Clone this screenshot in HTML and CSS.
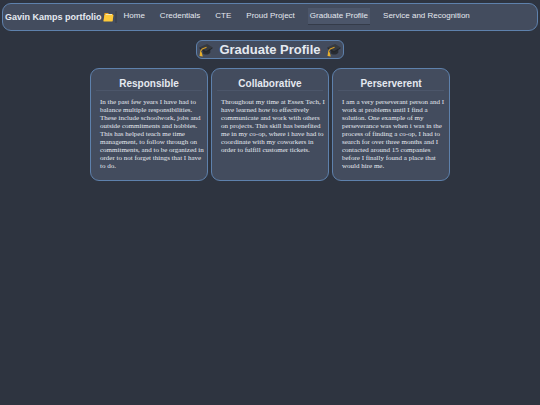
FILE: index.html
```
<!DOCTYPE html>
<html lang="en">
<head>
  <meta charset="UTF-8">
  <meta name="viewport" content="width=device-width, initial-scale=1">
  <title>Graduate Profile</title>
  <link rel="stylesheet" href="styles.css">
</head>
<body>
  <!-- Shared icon -->
  <svg class="defs" aria-hidden="true">
    <symbol id="cap" viewBox="0 0 26 26">
      <path d="M7 12v7c3 4 11 3 14-1v-7z" fill="#292d33"/>
      <path d="M1 8l14-6 10 6-12 8z" fill="#363a40"/>
      <path d="M1 8l12 8 12-8v2l-12 8-12-8z" fill="#24272c"/>
      <path d="M14 8L6 11l-3 4v4" fill="none" stroke="#d99f26" stroke-width="2"/>
      <path d="M2 17h3l2 8-6-1z" fill="#e8b02e"/>
    </symbol>
  </svg>

  <header class="navbar">
    <div class="brand">
      Gavin Kamps portfolio
      <svg class="folder" viewBox="0 0 22 20" aria-hidden="true">
        <path d="M3 2h7l2 2h8l-1 14H1z" fill="#e59a1c"/>
        <path d="M5 4h13v3H5z" fill="#f7e9b0"/>
        <path d="M3 6h18l-2 13H1z" fill="#fdc93a"/>
      </svg>
    </div>
    <nav>
      <a href="#">Home</a>
      <a href="#">Credentials</a>
      <a href="#">CTE</a>
      <a href="#">Proud Project</a>
      <a href="#" class="active">Graduate Profile</a>
      <a href="#">Service and Recognition</a>
    </nav>
  </header>

  <main>
    <h1>
      <svg class="cap" aria-hidden="true"><use href="#cap"/></svg>
      Graduate Profile
      <svg class="cap" aria-hidden="true"><use href="#cap"/></svg>
    </h1>

    <section class="cards">
      <article class="card">
        <h2>Responsible</h2>
        <p>In the past few years I have had to balance multiple responsibilities. These include schoolwork, jobs and outside commitments and hobbies. This has helped teach me time management, to follow through on commitments, and to be organized in order to not forget things that I have to do.</p>
      </article>
      <article class="card">
        <h2>Collaborative</h2>
        <p>Throughout my time at Essex Tech, I have learned how to effectively communicate and work with others on projects. This skill has benefited me in my co-op, where i have had to coordinate with my coworkers in order to fulfill customer tickets.</p>
      </article>
      <article class="card">
        <h2>Perserverent</h2>
        <p>I am a very perseverant person and I work at problems until I find a solution. One example of my perseverance was when i was in the process of finding a co-op, I had to search for over three months and I contacted around 15 companies before I finally found a place that would hire me.</p>
      </article>
    </section>
  </main>
</body>
</html>
```

FILE: styles.css
```
* {
  box-sizing: border-box;
}
body {
  margin: 3px 2px;
  background: #2e3440;
  color: #e5e9f0;
  font-family: "Liberation Sans", Arial, sans-serif;
}
.defs {
  display: none;
}
/* Navigation */
.navbar {
  display: flex;
  align-items: center;
  height: 28px;
  padding: 0 2px;
  background: #434c5e;
  border: 1px solid #5e81ac;
  border-radius: 9px;
}
.brand {
  display: flex;
  align-items: center;
  gap: 1px;
  padding-right: 1px;
  border-right: 2px solid #3b4252;
  font-size: 9px;
  line-height: 12px;
  font-weight: bold;
  white-space: nowrap;
}
.folder {
  width: 11px;
  height: 10px;
}
nav {
  display: flex;
  align-self: flex-start;
  gap: 11px;
  margin: 4px 0 0 5px;
}
nav a {
  padding: 3px 2px;
  border-bottom: 1px solid transparent;
  color: #e5e9f0;
  font-size: 8px;
  line-height: 10px;
  text-decoration: none;
  white-space: nowrap;
}
nav a.active {
  background: #4c566a;
  border-bottom-color: #343b49;
}
/* Page title */
h1 {
  display: flex;
  align-items: center;
  justify-content: center;
  gap: 6px;
  width: fit-content;
  margin: 9px auto;
  padding: 0 2px;
  background: #434c5e;
  border: 1px solid #5e81ac;
  border-radius: 6px;
  font-size: 13px;
  line-height: 17px;
}
.cap {
  width: 14px;
  height: 14px;
}
/* Cards */
.cards {
  display: grid;
  grid-template-columns: repeat(3, 1fr);
  gap: 3px;
  max-width: 360px;
  margin: 0 auto;
}
.card {
  padding: 8px 1px 10px;
  background: #434c5e;
  border: 1px solid #5e81ac;
  border-radius: 9px;
}
h2 {
  margin: 0 4px 7px;
  border-bottom: 1px solid #4c566a;
  font-size: 10px;
  line-height: 13px;
  text-align: center;
}
.card p {
  margin: 0 0 0 8px;
  font-family: "Liberation Serif", "Times New Roman", serif;
  font-size: 7px;
  line-height: 8px;
}
```
